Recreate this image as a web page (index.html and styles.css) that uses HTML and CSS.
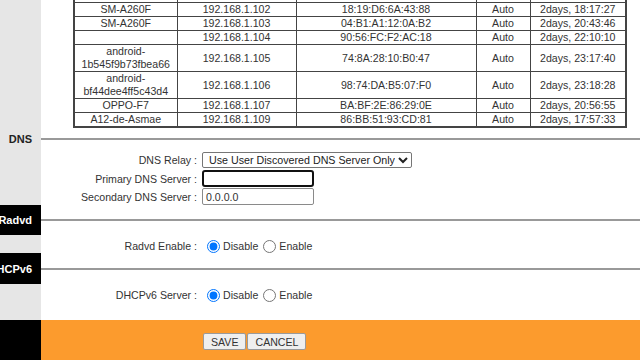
FILE: index.html
```html
<!DOCTYPE html>
<html>
    <head>
        <meta http-equiv="Content-Type" content="text/html; charset=UTF-8">
        <title>LAN Setup</title>
        <link rel="stylesheet" href="styles.css">
    </head>
    <body>
        <div class="page">
            <!-- DHCP client list -->
            <div class="row">
                <div class="side"></div>
                <div class="main">
                    <table class="clients">
                        <colgroup>
                            <col style="width: 103px">
                            <col style="width: 119px">
                            <col style="width: 180px">
                            <col style="width: 54px">
                            <col style="width: 96px">
                        </colgroup>
                        <tr><td></td><td></td><td></td><td></td><td></td></tr>
                        <tr><td>SM-A260F</td><td>192.168.1.102</td><td>18:19:D6:6A:43:88</td><td>Auto</td><td>2days, 18:17:27</td></tr>
                        <tr><td>SM-A260F</td><td>192.168.1.103</td><td>04:B1:A1:12:0A:B2</td><td>Auto</td><td>2days, 20:43:46</td></tr>
                        <tr><td></td><td>192.168.1.104</td><td>90:56:FC:F2:AC:18</td><td>Auto</td><td>2days, 22:10:10</td></tr>
                        <tr><td>android-1b545f9b73fbea66</td><td>192.168.1.105</td><td>74:8A:28:10:B0:47</td><td>Auto</td><td>2days, 23:17:40</td></tr>
                        <tr><td>android-bf44dee4ff5c43d4</td><td>192.168.1.106</td><td>98:74:DA:B5:07:F0</td><td>Auto</td><td>2days, 23:18:28</td></tr>
                        <tr><td>OPPO-F7</td><td>192.168.1.107</td><td>BA:BF:2E:86:29:0E</td><td>Auto</td><td>2days, 20:56:55</td></tr>
                        <tr><td>A12-de-Asmae</td><td>192.168.1.109</td><td>86:BB:51:93:CD:81</td><td>Auto</td><td>2days, 17:57:33</td></tr>
                    </table>
                </div>
            </div>

            <!-- DNS -->
            <div class="row head head-dns">
                <div class="side">DNS</div>
                <div class="main"><div class="rule"></div></div>
            </div>
            <div class="row">
                <div class="side"></div>
                <div class="main body-dns">
                    <div class="field f-select">
                        <span class="label">DNS Relay :</span>
                        <select>
                            <option>Use User Discovered DNS Server Only</option>
                        </select>
                    </div>
                    <div class="field f-input">
                        <span class="label">Primary DNS Server :</span>
                        <input type="text" class="text focused" value="">
                    </div>
                    <div class="field f-input f-last">
                        <span class="label">Secondary DNS Server :</span>
                        <input type="text" class="text" value="0.0.0.0">
                    </div>
                </div>
            </div>

            <!-- Radvd -->
            <div class="row head head-radvd">
                <div class="side dark">Radvd</div>
                <div class="main"><div class="rule"></div></div>
            </div>
            <div class="row">
                <div class="side"></div>
                <div class="main body-radvd">
                    <div class="field f-radio">
                        <span class="label">Radvd Enable :</span>
                        <span class="choices">
                            <input type="radio" name="radvd" checked>Disable
                            <input type="radio" name="radvd">Enable
                        </span>
                    </div>
                </div>
            </div>

            <!-- DHCPv6 -->
            <div class="row head head-dhcp">
                <div class="side dark">DHCPv6</div>
                <div class="main"><div class="rule"></div></div>
            </div>
            <div class="row">
                <div class="side"></div>
                <div class="main body-dhcp">
                    <div class="field f-radio">
                        <span class="label">DHCPv6 Server :</span>
                        <span class="choices">
                            <input type="radio" name="dhcp6" checked>Disable
                            <input type="radio" name="dhcp6">Enable
                        </span>
                    </div>
                </div>
            </div>

            <!-- buttons -->
            <div class="row footer">
                <div class="side dark"></div>
                <div class="main actions">
                    <button>SAVE</button>
                    <button>CANCEL</button>
                </div>
            </div>
        </div>
    </body>
</html>
```

FILE: styles.css
```css
/* Router setup page */
body {
    margin: 0;
    font-family: "Liberation Sans", Arial, sans-serif;
    font-size: 10.6px;
    color: #333;
    background-color: #fff;
    overflow: hidden;
}
.page {
    margin-top: -13px;
}
.row {
    display: flex;
}
.side {
    width: 41px;
    flex: none;
    background-color: #e6e6e6;
    color: #222;
    font-weight: bold;
    font-size: 11px;
    text-align: right;
    padding-right: 9px;
    box-sizing: border-box;
    overflow: hidden;
    white-space: nowrap;
    display: flex;
    align-items: center;
    justify-content: flex-end;
}
.side.dark {
    background-color: #000;
    color: #fff;
}
.main {
    flex: 1;
}

/* client table */
.clients {
    margin-left: 32px;
    border-collapse: collapse;
    table-layout: fixed;
    width: 552px;
    border: 2px solid #444;
}
.clients td {
    border: 1px solid #444;
    text-align: center;
    line-height: 13px;
    padding: 0;
    height: 13px;
}

/* section headings */
.head .main {
    display: flex;
    align-items: center;
}
.rule {
    flex: 1;
    height: 2px;
    background-color: #999;
}
.head-dns {
    height: 21px;
}
.head-radvd {
    height: 30px;
}
.head-dhcp {
    height: 31px;
}

/* form rows */
.field {
    display: grid;
    grid-template-columns: 156px auto;
    column-gap: 5px;
    align-items: center;
}
.label {
    text-align: right;
}
.body-dns {
    padding-top: 3px;
    height: 56px;
    box-sizing: border-box;
}
.f-select {
    height: 16px;
    margin-bottom: 2px;
}
.f-input {
    height: 17px;
    margin-bottom: 1px;
}
.f-last {
    margin-bottom: 0;
}
select {
    font-family: "Liberation Sans", Arial, sans-serif;
    font-size: 10.7px;
    height: 16px;
    padding: 0 0 0 2px;
    color: #222;
    border: 1px solid #767676;
    border-radius: 2px;
    background-color: #fff;
    justify-self: start;
}
.text {
    width: 112px;
    height: 17px;
    box-sizing: border-box;
    margin: 0;
    padding: 0 3px;
    font-family: "Liberation Sans", Arial, sans-serif;
    font-size: 10.6px;
    color: #333;
    border: 1px solid #8a8a8a;
    border-radius: 2px;
}
.text.focused {
    border: 2px solid #111;
    border-radius: 3px;
}
.body-radvd {
    padding-top: 4px;
    height: 18px;
    box-sizing: border-box;
}
.body-dhcp {
    padding-top: 4px;
    height: 36px;
    box-sizing: border-box;
}
.f-radio {
    height: 14px;
}
.choices {
    display: flex;
    align-items: center;
}
.choices input {
    width: 13px;
    height: 13px;
    margin: 0 3px 0 5px;
}
.choices input + input {
    margin-left: 5px;
}

/* footer */
.footer {
    height: 41px;
}
.footer .side {
    align-items: stretch;
}
.actions {
    background-color: #fc9b2d;
    padding: 13px 0 0 162px;
    display: flex;
    align-items: flex-start;
    gap: 1px;
}
.actions button {
    font-family: "Liberation Sans", Arial, sans-serif;
    font-size: 10.6px;
    color: #333;
    height: 17px;
    padding: 0 7px;
    background-color: #efefef;
    border: 1px solid #9a9a9a;
    border-radius: 2px;
}
```
